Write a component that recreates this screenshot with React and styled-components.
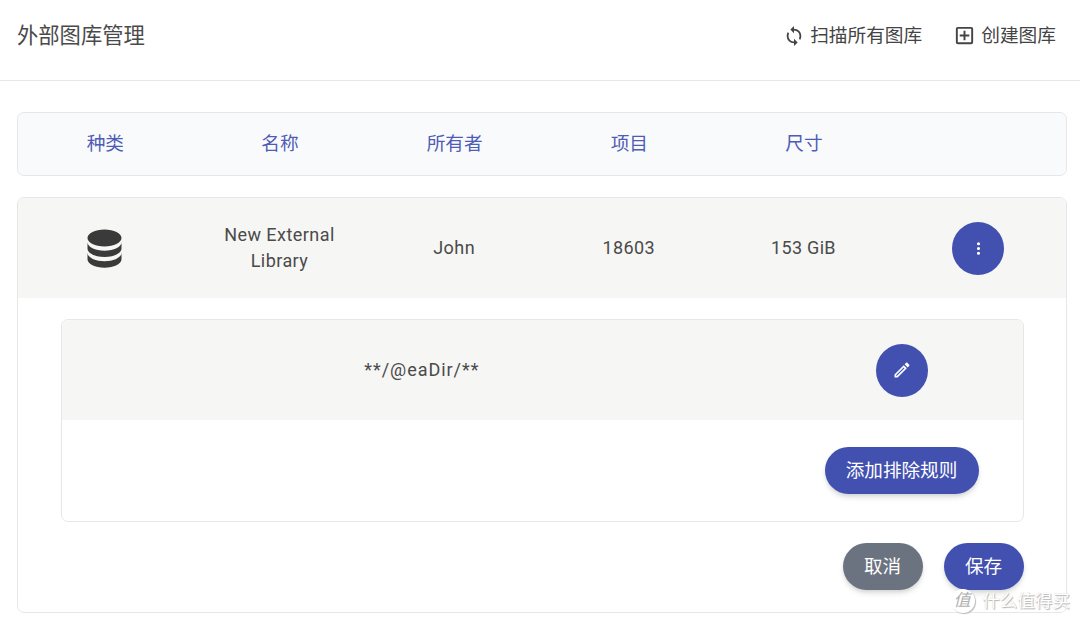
import React from 'react';
import styled, { createGlobalStyle } from 'styled-components';

const GlobalStyle = createGlobalStyle`
  * {
    box-sizing: border-box;
  }

  body {
    margin: 0;
    background: #fff;
    color: #3c3c3c;
    font-family: Roboto, "Noto Sans CJK SC", sans-serif;
  }
`;

// Material Design icon paths, 24x24
const icons = {
  sync: 'M12,18A6,6 0 0,1 6,12C6,11 6.25,10.03 6.7,9.2L5.24,7.74C4.46,8.97 4,10.43 4,12A8,8 0 0,0 12,20V23L16,19L12,15M12,4V1L8,5L12,9V6A6,6 0 0,1 18,12C18,13 17.75,13.97 17.3,14.8L18.76,16.26C19.54,15.03 20,13.57 20,12A8,8 0 0,0 12,4Z',
  plusBox: 'M19,19V5H5V19H19M19,3A2,2 0 0,1 21,5V19A2,2 0 0,1 19,21H5A2,2 0 0,1 3,19V5C3,3.89 3.9,3 5,3H19M11,7H13V11H17V13H13V17H11V13H7V11H11V7Z',
  database: 'M12,3C7.58,3 4,4.79 4,7C4,9.21 7.58,11 12,11C16.42,11 20,9.21 20,7C20,4.79 16.42,3 12,3M4,9V12C4,14.21 7.58,16 12,16C16.42,16 20,14.21 20,12V9C20,11.21 16.42,13 12,13C7.58,13 4,11.21 4,9M4,14V17C4,19.21 7.58,21 12,21C16.42,21 20,19.21 20,17V14C20,16.21 16.42,18 12,18C7.58,18 4,16.21 4,14Z',
  dots: 'M12,16A2,2 0 0,1 14,18A2,2 0 0,1 12,20A2,2 0 0,1 10,18A2,2 0 0,1 12,16M12,10A2,2 0 0,1 14,12A2,2 0 0,1 12,14A2,2 0 0,1 10,12A2,2 0 0,1 12,10M12,4A2,2 0 0,1 14,6A2,2 0 0,1 12,8A2,2 0 0,1 10,6A2,2 0 0,1 12,4Z',
  pencil: 'M14.06,9L15,9.94L5.92,19H5V18.08L14.06,9M17.66,3C17.41,3 17.15,3.1 16.96,3.29L15.13,5.12L18.88,8.87L20.71,7.04C21.1,6.65 21.1,6 20.71,5.63L18.37,3.29C18.17,3.09 17.92,3 17.66,3M14.06,6.19L3,17.25V21H6.75L17.81,9.94L14.06,6.19Z',
};

const Icon = ({ name, size }) => (
  <svg width={size} height={size} viewBox="0 0 24 24" fill="currentColor">
    <path d={icons[name]} />
  </svg>
);

const Header = styled.header`
  display: flex;
  align-items: center;
  justify-content: space-between;
  height: 81px;
  padding: 0 24px 9px 17px;
  border-bottom: 1px solid #e5e7eb;
`;

const Title = styled.h1`
  margin: 0;
  color: #4a4a4a;
  font-size: 21.3px;
  font-weight: 400;
  line-height: 32px;
`;

const Actions = styled.div`
  display: flex;
  gap: 31px;
`;

const LinkButton = styled.button`
  display: flex;
  align-items: center;
  gap: 5px;
  padding: 0;
  border: none;
  background: none;
  color: #444;
  font-family: inherit;
  font-size: 18.7px;
  line-height: 28px;
  cursor: pointer;
`;

const Main = styled.main`
  padding: 31px 13px 0 17px;
`;

const TableHead = styled.div`
  display: grid;
  grid-template-columns: repeat(6, 1fr);
  align-items: center;
  height: 64px;
  padding-bottom: 5px;
  border: 1px solid #e5e7eb;
  border-radius: 7px;
  background: #f9fafc;
  color: #4f5cb5;
  font-size: 18.7px;
  text-align: center;
`;

const Card = styled.section`
  margin-top: 21px;
  height: 416px;
  border: 1px solid #e5e7eb;
  border-radius: 7px;
  overflow: hidden;
`;

const Row = styled.div`
  display: grid;
  grid-template-columns: ${(props) => props.$columns};
  align-items: center;
  height: 100px;
  background: #f6f6f4;
`;

const Cell = styled.div`
  display: flex;
  align-items: center;
  justify-content: center;
  padding: 0 18px 0 17px;
  color: ${(props) => (props.$icon ? '#3a3a3a' : '#4a4a4a')};
  font-size: 18px;
  line-height: 26px;
  letter-spacing: ${(props) => props.$spacing || '0.45px'};
  text-align: center;
`;

const Label = styled.span`
  padding-bottom: 1px;
`;

const RoundButton = styled.button`
  display: flex;
  align-items: center;
  justify-content: center;
  width: 52px;
  height: 53px;
  padding: 0;
  border: none;
  border-radius: 50%;
  background: #4250af;
  color: #fff;
  cursor: pointer;
`;

const Panel = styled.div`
  margin: 21px 42px 0 43px;
  height: 203px;
  border: 1px solid #e5e7eb;
  border-radius: 7px;
  overflow: hidden;
`;

const PanelFooter = styled.div`
  display: flex;
  justify-content: flex-end;
  padding: 27px 44px 0 0;
`;

const PillButton = styled.button`
  width: ${(props) => props.$width}px;
  height: 47px;
  padding: 0 1px 5px 0;
  border: none;
  border-radius: 24px;
  background: ${(props) => (props.$gray ? '#6b7280' : '#4250af')};
  box-shadow: 0 4px 6px -1px rgba(0, 0, 0, 0.12), 0 2px 4px -1px rgba(0, 0, 0, 0.1);
  color: #fff;
  font-family: inherit;
  font-size: 18.6px;
  font-weight: 400;
  cursor: pointer;
`;

const FormActions = styled.div`
  display: flex;
  justify-content: flex-end;
  gap: 21px;
  padding: 21px 42px 0 0;
`;

const Watermark = styled.div`
  position: absolute;
  top: 588px;
  left: 951px;
  display: flex;
  align-items: center;
  gap: 7px;
  color: #fff;
  font-size: 17.6px;
  line-height: 26px;
  white-space: nowrap;
  text-shadow: 1px 1px 1px #b4b4b4, 0 0 1px #ccc;
`;

const WatermarkBadge = styled.span`
  display: flex;
  align-items: center;
  justify-content: center;
  width: 24px;
  height: 24px;
  padding: 0 2px 2px 0;
  border-radius: 50%;
  background: #fff;
  box-shadow: 1px 1px 1px #bbb;
  color: #b0b0b0;
  font-size: 17px;
  font-style: italic;
  text-shadow: none;
`;

const columns = ['种类', '名称', '所有者', '项目', '尺寸', ''];

export default function App() {
  return (
    <>
      <GlobalStyle />
      <Header>
        <Title>外部图库管理</Title>
        <Actions>
          <LinkButton>
            <Icon name="sync" size={22} />
            扫描所有图库
          </LinkButton>
          <LinkButton>
            <Icon name="plusBox" size={23} />
            创建图库
          </LinkButton>
        </Actions>
      </Header>

      <Main>
        <TableHead>
          {columns.map((column, index) => (
            <div key={index}>{column}</div>
          ))}
        </TableHead>

        <Card>
          <Row $columns="repeat(6, 1fr)">
            <Cell $icon>
              <Icon name="database" size={51} />
            </Cell>
            <Cell>New External Library</Cell>
            <Cell>
              <Label>John</Label>
            </Cell>
            <Cell $spacing="0.4px">
              <Label>18603</Label>
            </Cell>
            <Cell $spacing="0.3px">
              <Label>153 GiB</Label>
            </Cell>
            <Cell>
              <RoundButton aria-label="menu">
                <Icon name="dots" size={19} />
              </RoundButton>
            </Cell>
          </Row>

          <Panel>
            <Row $columns="3fr 1fr">
              <Cell $spacing="0.95px">
                <Label>**/@eaDir/**</Label>
              </Cell>
              <Cell>
                <RoundButton aria-label="edit">
                  <Icon name="pencil" size={20} />
                </RoundButton>
              </Cell>
            </Row>
            <PanelFooter>
              <PillButton $width={154}>添加排除规则</PillButton>
            </PanelFooter>
          </Panel>

          <FormActions>
            <PillButton $width={80} $gray>
              取消
            </PillButton>
            <PillButton $width={80}>保存</PillButton>
          </FormActions>
        </Card>
      </Main>

      <Watermark>
        <WatermarkBadge>值</WatermarkBadge>
        什么值得买
      </Watermark>
    </>
  );
}
